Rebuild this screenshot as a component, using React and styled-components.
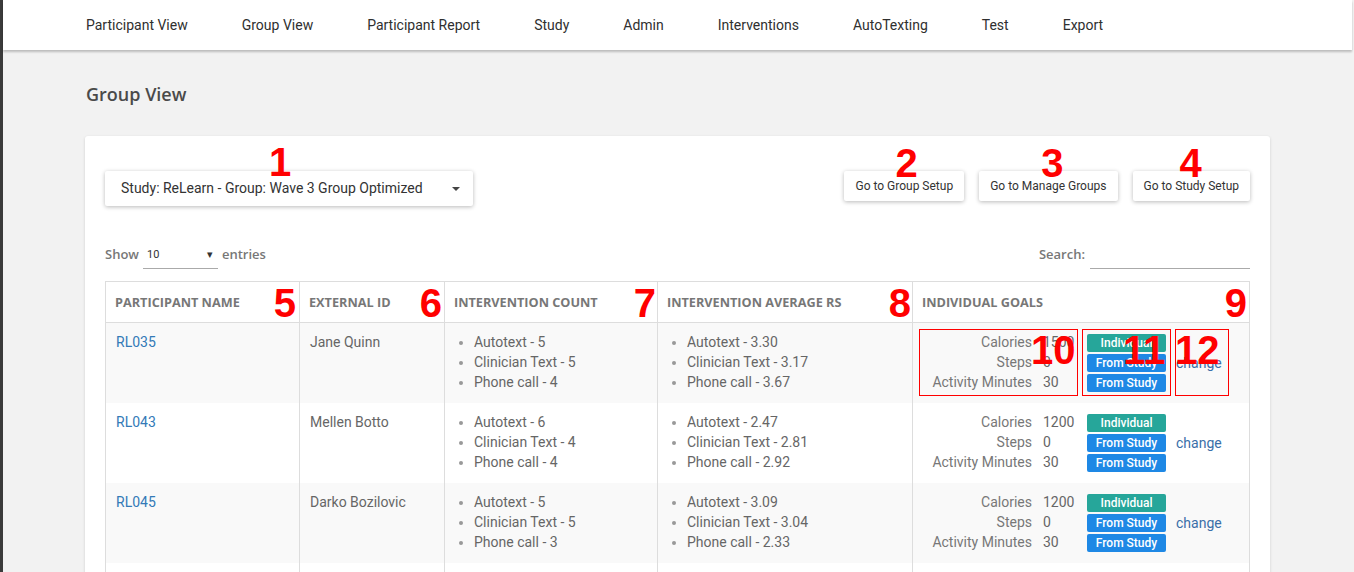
import React from "react";
import styled, { createGlobalStyle } from "styled-components";

const Global = createGlobalStyle`
  html, body { margin: 0; padding: 0; }
  body { font-family: Roboto, "Liberation Sans", sans-serif; background: #f2f2f2; overflow: hidden; }
  * { box-sizing: border-box; }
`;

const Shell = styled.div`
  min-height: 100vh;
  background: #f2f2f2;
  border-left: 3px solid #3b3b3b;
`;

const NavBar = styled.nav`
  height: 50px;
  margin-right: 2px;
  background: #fff;
  box-shadow: 0 2px 2px rgba(0, 0, 0, 0.22);
  display: flex;
  align-items: center;
  padding-left: 56px;
`;

const NavItem = styled.a`
  padding: 0 27px;
  font-family: Roboto, sans-serif;
  font-size: 14px;
  color: #2f2f2f;
  line-height: 50px;
  text-decoration: none;
  white-space: nowrap;
`;

const Main = styled.main`
  padding: 32px 82px 0 82px;
`;

const Title = styled.h1`
  margin: 0 0 30px 1px;
  font-family: "Open Sans", sans-serif;
  font-weight: 600;
  font-size: 18px;
  line-height: 24px;
  color: #4a4a4a;
`;

const Card = styled.section`
  width: 1185px;
  background: #fff;
  border-radius: 3px;
  box-shadow: 0 1px 3px rgba(0, 0, 0, 0.15);
  padding: 35px 20px 40px 20px;
`;

const TopRow = styled.div`
  display: flex;
  align-items: flex-start;
  justify-content: space-between;
`;

const Annotated = styled.div`
  position: relative;
`;

const Mark = styled.span`
  position: absolute;
  top: ${(p) => p.$top}px;
  ${(p) => (p.$right !== undefined ? `right: ${p.$right}px;` : `left: ${p.$left}px;`)}
  font-family: "Liberation Sans", Arial, sans-serif;
  font-weight: 700;
  font-size: 40px;
  line-height: 40px;
  color: #ff0000;
  pointer-events: none;
  white-space: nowrap;
  z-index: 2;
`;

const Box = styled.span`
  position: absolute;
  top: 6px;
  left: ${(p) => p.$left}px;
  width: ${(p) => p.$width}px;
  height: 67px;
  border: 1px solid #ff0000;
  pointer-events: none;
  z-index: 3;
`;

const Dropdown = styled.div`
  width: 368px;
  height: 35px;
  background: #fff;
  border-radius: 2px;
  box-shadow: 0 1px 4px rgba(0, 0, 0, 0.28);
  display: flex;
  align-items: center;
  justify-content: space-between;
  padding: 0 13px 2px 16px;
  font-size: 14px;
  color: #333;
`;

const Caret = styled.span`
  width: 0;
  height: 0;
  margin-top: 2px;
  border-left: 4px solid transparent;
  border-right: 4px solid transparent;
  border-top: 4px solid #444;
`;

const ButtonGroup = styled.div`
  display: flex;
  gap: 15px;
`;

const Button = styled.button`
  height: 30px;
  padding: 0 11px;
  border: none;
  border-radius: 2px;
  background: #fff;
  box-shadow: 0 1px 4px rgba(0, 0, 0, 0.28);
  font-family: Roboto, sans-serif;
  font-size: 12px;
  color: #333;
  white-space: nowrap;
`;

const ControlRow = styled.div`
  margin-top: 36px;
  display: flex;
  justify-content: space-between;
  align-items: flex-start;
`;

const LabelText = styled.span`
  font-family: "Open Sans", sans-serif;
  font-weight: 600;
  font-size: 13px;
  color: #777;
`;

const ShowWrap = styled.div`
  display: flex;
  align-items: center;
  gap: 4px;
  height: 24px;
`;

const Select = styled.div`
  width: 75px;
  height: 27px;
  margin-top: 3px;
  border-bottom: 1px solid #aaa;
  display: flex;
  align-items: center;
  justify-content: space-between;
  padding: 0 5px 2px 4px;
  font-size: 11px;
  color: #333;
`;

const SearchWrap = styled.div`
  display: flex;
  align-items: center;
  gap: 5px;
  height: 24px;
`;

const SearchInput = styled.div`
  width: 160px;
  height: 27px;
  margin-top: 3px;
  border-bottom: 1px solid #aaa;
`;

const Table = styled.table`
  margin-top: 15px;
  width: 1145px;
  border-collapse: collapse;
  table-layout: fixed;
`;

const Th = styled.th`
  position: relative;
  height: 41px;
  padding: 0 9px 1px 9px;
  border: 1px solid #ddd;
  text-align: left;
  font-family: "Open Sans", sans-serif;
  font-weight: 700;
  font-size: 12.7px;
  color: #777;
  text-transform: uppercase;
  white-space: nowrap;
`;

const Tr = styled.tr`
  height: 80px;
  background: ${(p) => (p.$odd ? "#f9f9f9" : "#fff")};
`;

const Td = styled.td`
  position: relative;
  padding: 9px 10px 11px 10px;
  border-left: 1px solid #ddd;
  border-right: 1px solid #ddd;
  vertical-align: top;
  font-size: 14px;
  line-height: 20px;
  color: #666;
`;

const Link = styled.a`
  color: #337ab7;
  text-decoration: none;
`;

const List = styled.ul`
  margin: 0;
  padding-left: 19px;
  li::marker { color: #999; font-size: 13px; }
`;

const Goals = styled.div`
  display: grid;
  grid-template-columns: 109px 34px 80px auto;
  grid-template-rows: 20px 20px 20px;
  column-gap: 10px;
  margin: 1px 0 -1px 0;
  color: #777;
`;

const GoalLabel = styled.span`
  text-align: right;
  margin-top: -1px;
`;

const GoalValue = styled.span`
  color: #666;
  margin: -1px 0 0 1px;
`;

const Badge = styled.span`
  align-self: center;
  height: 18px;
  margin-left: 1px;
  border-radius: 2px;
  background: ${(p) => (p.$kind === "individual" ? "#26a69a" : "#1e88e5")};
  color: #fff;
  font-size: 12px;
  font-weight: 500;
  line-height: 18px;
  text-align: center;
`;

const Change = styled.a`
  grid-column: 4;
  grid-row: 1 / span 3;
  align-self: center;
  color: #3a6fa8;
  text-decoration: none;
`;

const navItems = ["Participant View", "Group View", "Participant Report", "Study", "Admin", "Interventions", "AutoTexting", "Test", "Export"];

const rows = [
  { id: "RL035", name: "Jane Quinn", counts: [5, 5, 4], avgs: ["3.30", "3.17", "3.67"], goals: [1500, 0, 30], annotate: true },
  { id: "RL043", name: "Mellen Botto", counts: [6, 4, 4], avgs: ["2.47", "2.81", "2.92"], goals: [1200, 0, 30] },
  { id: "RL045", name: "Darko Bozilovic", counts: [5, 5, 3], avgs: ["3.09", "3.04", "2.33"], goals: [1200, 0, 30] },
  { id: "RL047", name: "Mark Hollis", counts: [4, 5, 4], avgs: ["3.12", "2.95", "3.10"], goals: [1200, 0, 30] },
];

const kinds = ["Autotext", "Clinician Text", "Phone call"];
const goalLabels = ["Calories", "Steps", "Activity Minutes"];
const goalKinds = ["individual", "study", "study"];

const headers = [
  { label: "Participant Name", n: "5", right: 3 },
  { label: "External ID", n: "6", right: 2 },
  { label: "Intervention Count", n: "7", right: 1 },
  { label: "Intervention Average RS", n: "8", right: 1 },
  { label: "Individual Goals", n: "9", right: 2 },
];

export default function App() {
  return (
    <>
      <Global />
      <Shell>
        <NavBar>
          {navItems.map((n) => (
            <NavItem key={n}>{n}</NavItem>
          ))}
        </NavBar>
        <Main>
          <Title>Group View</Title>
          <Card>
            <TopRow>
              <Annotated>
                <Dropdown>
                  <span>Study: ReLearn - Group: Wave 3 Group Optimized</span>
                  <Caret />
                </Dropdown>
                <Mark $top={-29} $left={164}>1</Mark>
              </Annotated>
              <ButtonGroup>
                <Annotated>
                  <Button>Go to Group Setup</Button>
                  <Mark $top={-28} $left={51}>2</Mark>
                </Annotated>
                <Annotated>
                  <Button>Go to Manage Groups</Button>
                  <Mark $top={-28} $left={62}>3</Mark>
                </Annotated>
                <Annotated>
                  <Button>Go to Study Setup</Button>
                  <Mark $top={-28} $left={47}>4</Mark>
                </Annotated>
              </ButtonGroup>
            </TopRow>
            <ControlRow>
              <ShowWrap>
                <LabelText>Show</LabelText>
                <Select>
                  <span>10</span>
                  <span>▾</span>
                </Select>
                <LabelText>entries</LabelText>
              </ShowWrap>
              <SearchWrap>
                <LabelText>Search:</LabelText>
                <SearchInput />
              </SearchWrap>
            </ControlRow>
            <Table>
              <colgroup>
                <col style={{ width: 194 }} />
                <col style={{ width: 145 }} />
                <col style={{ width: 213 }} />
                <col style={{ width: 255 }} />
                <col style={{ width: 337 }} />
              </colgroup>
              <thead>
                <tr>
                  {headers.map((h) => (
                    <Th key={h.label}>
                      {h.label}
                      <Mark $top={1} $right={h.right}>{h.n}</Mark>
                    </Th>
                  ))}
                </tr>
              </thead>
              <tbody>
                {rows.map((r, i) => (
                  <Tr key={r.id} $odd={i % 2 === 0}>
                    <Td>
                      <Link>{r.id}</Link>
                    </Td>
                    <Td>{r.name}</Td>
                    <Td>
                      <List>
                        {kinds.map((k, j) => (
                          <li key={k}>{k} - {r.counts[j]}</li>
                        ))}
                      </List>
                    </Td>
                    <Td>
                      <List>
                        {kinds.map((k, j) => (
                          <li key={k}>{k} - {r.avgs[j]}</li>
                        ))}
                      </List>
                    </Td>
                    <Td>
                      <Goals>
                        {goalLabels.map((g, j) => (
                          <React.Fragment key={g}>
                            <GoalLabel>{g}</GoalLabel>
                            <GoalValue>{r.goals[j]}</GoalValue>
                            <Badge $kind={goalKinds[j]}>{goalKinds[j] === "individual" ? "Individual" : "From Study"}</Badge>
                          </React.Fragment>
                        ))}
                        <Change>change</Change>
                      </Goals>
                      {r.annotate && (
                        <>
                          <Box $left={6} $width={159} />
                          <Box $left={169} $width={89} />
                          <Box $left={262} $width={54} />
                          <Mark $top={7} $left={118}>10</Mark>
                          <Mark $top={7} $left={210}>11</Mark>
                          <Mark $top={7} $left={262}>12</Mark>
                        </>
                      )}
                    </Td>
                  </Tr>
                ))}
              </tbody>
            </Table>
          </Card>
        </Main>
      </Shell>
    </>
  );
}
